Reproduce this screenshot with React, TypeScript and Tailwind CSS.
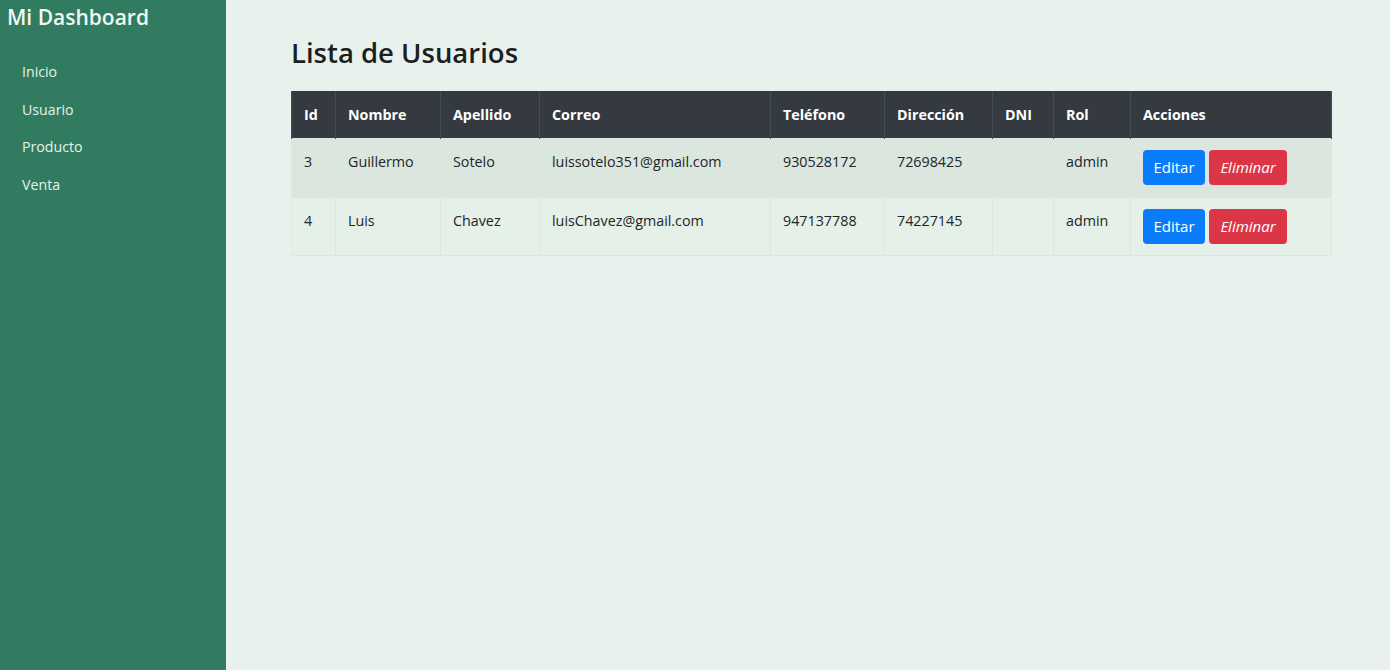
const navItems = ['Inicio', 'Usuario', 'Producto', 'Venta'];

const usuarios = [
  {
    id: 3,
    nombre: 'Guillermo',
    apellido: 'Sotelo',
    correo: 'luissotelo351@gmail.com',
    telefono: '930528172',
    direccion: '72698425',
    dni: '',
    rol: 'admin',
  },
  {
    id: 4,
    nombre: 'Luis',
    apellido: 'Chavez',
    correo: 'luisChavez@gmail.com',
    telefono: '947137788',
    direccion: '74227145',
    dni: '',
    rol: 'admin',
  },
];

const columns = [
  { label: 'Id', w: 'w-[44px]' },
  { label: 'Nombre', w: 'w-[105px]' },
  { label: 'Apellido', w: 'w-[99px]' },
  { label: 'Correo', w: 'w-[231px]' },
  { label: 'Teléfono', w: 'w-[114px]' },
  { label: 'Dirección', w: 'w-[108px]' },
  { label: 'DNI', w: 'w-[61px]' },
  { label: 'Rol', w: 'w-[77px]' },
  { label: 'Acciones', w: 'w-[201px]' },
];

const cell = 'border border-[#dfe6e1] px-[12px] pt-[12px] align-top leading-[22px]';

const App = () => {
  return (
    <div className="flex min-h-screen h-[670px] font-['Open_Sans',sans-serif] text-[#212529]">
      <aside className="w-[226px] shrink-0 bg-[#317c60] text-[#f0f7f2]">
        <h1 className="px-[7px] pt-[2px] text-[21px] font-semibold leading-[30px]">Mi Dashboard</h1>
        <nav className="mt-[29px] flex flex-col gap-[15px] px-[22px]">
          {navItems.map((item) => (
            <a key={item} href="#" className="text-[14.2px] leading-[22.5px] text-[#e4f3ea]">
              {item}
            </a>
          ))}
        </nav>
      </aside>

      <main className="flex-1 bg-[#e8f1eb] pl-[65px] pr-[59px] pt-[34px]">
        <h2 className="mb-[19px] text-[27.5px] font-semibold leading-[38px] text-[#1c1f21]">Lista de Usuarios</h2>

        <table className="w-[1040px] table-fixed border-collapse text-[14.3px]">
          <thead>
            <tr className="h-[47px] bg-[#343a40] text-white">
              {columns.map((c) => (
                <th
                  key={c.label}
                  className={`${c.w} border-x border-[#454d55] px-[12px] text-left align-middle font-bold`}
                >
                  {c.label}
                </th>
              ))}
            </tr>
          </thead>
          <tbody>
            {usuarios.map((u, i) => (
              <tr key={u.id} className={i % 2 === 0 ? 'h-[59px] bg-[#dbe6de]' : 'h-[58px] bg-[#e5f0e9]'}>
                <td className={cell}>{u.id}</td>
                <td className={cell}>{u.nombre}</td>
                <td className={cell}>{u.apellido}</td>
                <td className={cell}>{u.correo}</td>
                <td className={cell}>{u.telefono}</td>
                <td className={cell}>{u.direccion}</td>
                <td className={cell}>{u.dni}</td>
                <td className={cell}>{u.rol}</td>
                <td className="border border-[#dfe6e1] px-[12px] pt-[11px] align-top">
                  <div className="flex gap-[4px]">
                    <button className="h-[35px] w-[62px] rounded-[4px] bg-[#0a7cf9] text-[15px] text-white">
                      Editar
                    </button>
                    <button className="h-[35px] w-[78px] rounded-[4px] bg-[#dc3545] text-[15px] italic text-white">
                      Eliminar
                    </button>
                  </div>
                </td>
              </tr>
            ))}
          </tbody>
        </table>
      </main>
    </div>
  );
};

export default App;
